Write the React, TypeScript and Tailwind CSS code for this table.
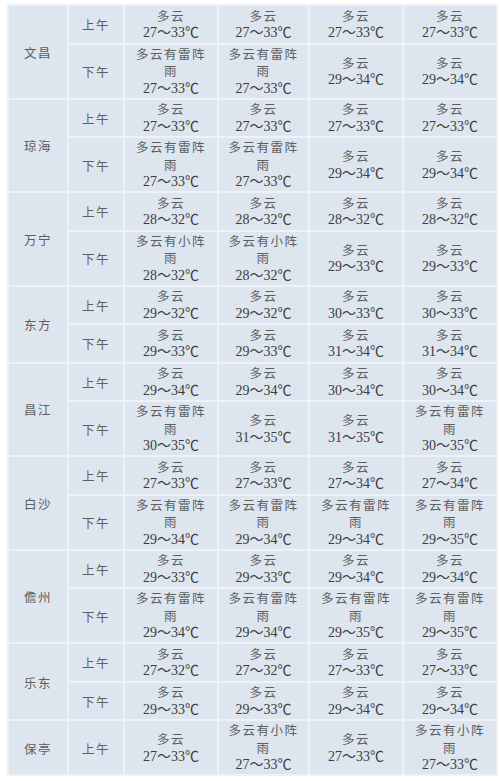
type Cell = { desc: string; temp: string }

type Row = { city?: string; span?: number; period: string; cells: Cell[] }

const c = (desc: string, temp: string): Cell => ({ desc, temp })

const rows: Row[] = [
  { city: '文昌', span: 2, period: '上午', cells: [c('多云', '27～33'), c('多云', '27～33'), c('多云', '27～33'), c('多云', '27～33')] },
  { period: '下午', cells: [c('多云有雷阵雨', '27～33'), c('多云有雷阵雨', '27～33'), c('多云', '29～34'), c('多云', '29～34')] },
  { city: '琼海', span: 2, period: '上午', cells: [c('多云', '27～33'), c('多云', '27～33'), c('多云', '27～33'), c('多云', '27～33')] },
  { period: '下午', cells: [c('多云有雷阵雨', '27～33'), c('多云有雷阵雨', '27～33'), c('多云', '29～34'), c('多云', '29～34')] },
  { city: '万宁', span: 2, period: '上午', cells: [c('多云', '28～32'), c('多云', '28～32'), c('多云', '28～32'), c('多云', '28～32')] },
  { period: '下午', cells: [c('多云有小阵雨', '28～32'), c('多云有小阵雨', '28～32'), c('多云', '29～33'), c('多云', '29～33')] },
  { city: '东方', span: 2, period: '上午', cells: [c('多云', '29～32'), c('多云', '29～32'), c('多云', '30～33'), c('多云', '30～33')] },
  { period: '下午', cells: [c('多云', '29～33'), c('多云', '29～33'), c('多云', '31～34'), c('多云', '31～34')] },
  { city: '昌江', span: 2, period: '上午', cells: [c('多云', '29～34'), c('多云', '29～34'), c('多云', '30～34'), c('多云', '30～34')] },
  { period: '下午', cells: [c('多云有雷阵雨', '30～35'), c('多云', '31～35'), c('多云', '31～35'), c('多云有雷阵雨', '30～35')] },
  { city: '白沙', span: 2, period: '上午', cells: [c('多云', '27～33'), c('多云', '27～33'), c('多云', '27～34'), c('多云', '27～34')] },
  { period: '下午', cells: [c('多云有雷阵雨', '29～34'), c('多云有雷阵雨', '29～34'), c('多云有雷阵雨', '29～34'), c('多云有雷阵雨', '29～35')] },
  { city: '儋州', span: 2, period: '上午', cells: [c('多云', '29～33'), c('多云', '29～33'), c('多云', '29～34'), c('多云', '29～34')] },
  { period: '下午', cells: [c('多云有雷阵雨', '29～34'), c('多云有雷阵雨', '29～34'), c('多云有雷阵雨', '29～35'), c('多云有雷阵雨', '29～35')] },
  { city: '乐东', span: 2, period: '上午', cells: [c('多云', '27～32'), c('多云', '27～32'), c('多云', '27～33'), c('多云', '27～33')] },
  { period: '下午', cells: [c('多云', '29～33'), c('多云', '29～33'), c('多云', '29～34'), c('多云', '29～34')] },
  { city: '保亭', span: 1, period: '上午', cells: [c('多云', '27～33'), c('多云有小阵雨', '27～33'), c('多云', '27～33'), c('多云有小阵雨', '27～33')] },
]

const cjk = "font-['Noto_Sans_CJK_SC',sans-serif] text-[12.5px] tracking-[1.5px] text-[#5e5e5e] leading-[17.5px]"
const num = "font-['Liberation_Serif','Noto_Sans_CJK_SC',serif] text-[14px] text-[#3c3c3c] leading-[17.5px]"
const td = 'border-2 border-[#eef2f8] text-center align-middle p-0'

function WeatherCell({ cell }: { cell: Cell }) {
  const long = cell.desc.length > 5
  return (
    <td className={td}>
      <div className={cjk}>{long ? cell.desc.slice(0, 5) : cell.desc}</div>
      {long && <div className={cjk}>{cell.desc.slice(5)}</div>}
      <div className={num}>{cell.temp}℃</div>
    </td>
  )
}

export default function App() {
  return (
    <div className="bg-white w-[500px] h-[781px] pt-[4px] pl-[7px]">
      <table className="table-fixed border-collapse bg-[#dde5ef] w-[489px]">
        <colgroup>
          <col className="w-[60px]" />
          <col className="w-[56px]" />
          <col className="w-[94px]" />
          <col className="w-[91px]" />
          <col className="w-[94px]" />
          <col className="w-[94px]" />
        </colgroup>
        <tbody>
          {rows.map((r, i) => {
            const tall = r.cells.some((x) => x.desc.length > 5)
            return (
              <tr key={i} className={tall ? 'h-[55px]' : 'h-[38.5px]'}>
                {r.city && (
                  <td rowSpan={r.span} className={td}>
                    <span className={cjk}>{r.city}</span>
                  </td>
                )}
                <td className={td}>
                  <span className={cjk}>{r.period}</span>
                </td>
                {r.cells.map((cell, j) => (
                  <WeatherCell key={j} cell={cell} />
                ))}
              </tr>
            )
          })}
        </tbody>
      </table>
    </div>
  )
}
